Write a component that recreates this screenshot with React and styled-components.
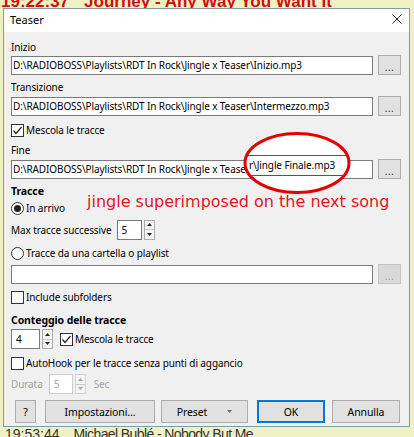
import React from "react";
import styled, { createGlobalStyle } from "styled-components";

const GlobalStyle = createGlobalStyle`
  html, body {
    margin: 0;
    padding: 0;
  }
  body {
    background: #eff1c5;
    font-family: "Noto Sans", "Liberation Sans", sans-serif;
  }
`;

const Screen = styled.div`
  width: 414px;
  height: 437px;
  overflow: hidden;
  display: flex;
  flex-direction: column;
  background: #eff1c5;
`;

const PlaylistLine = styled.div`
  flex-shrink: 0;
  height: ${(p) => p.$h}px;
  overflow: hidden;
  display: flex;
  align-items: ${(p) => (p.$top ? "flex-end" : "flex-start")};
  gap: ${(p) => p.$gap}px;
  padding-left: ${(p) => p.$pl}px;
  color: ${(p) => p.$color};
  font-family: "Liberation Sans", Arial, sans-serif;
  font-size: ${(p) => p.$size}px;
  font-weight: ${(p) => (p.$bold ? 700 : 400)};
  line-height: ${(p) => p.$lh}px;
  white-space: nowrap;
`;

const Dialog = styled.div`
  position: relative;
  flex-shrink: 0;
  margin-left: 3px;
  width: 407px;
  height: 419px;
  box-sizing: border-box;
  border: 1px solid #7d9fa3;
  background: #f0f0f0;
  display: flex;
  flex-direction: column;
  font-size: 10px;
  letter-spacing: -0.1px;
  color: #000;
`;

const TitleBar = styled.div`
  height: 20px;
  background: #fff;
  display: flex;
  align-items: center;
  justify-content: space-between;
  padding: 0 7px 3px 6px;
  font-size: 11px;
  letter-spacing: 0;
`;

const Body = styled.div`
  flex: 1;
  display: flex;
  flex-direction: column;
  padding: 8px 8px 0 7px;
`;

const Line = styled.div`
  margin-top: ${(p) => p.$mt || 0}px;
  margin-left: ${(p) => p.$ml || 0}px;
  height: ${(p) => p.$h || 14}px;
  display: flex;
  align-items: center;
  gap: ${(p) => p.$gap || 0}px;
  line-height: 14px;
  white-space: nowrap;
  color: ${(p) => (p.$disabled ? "#a2a2a2" : "#000")};
`;

const SectionTitle = styled(Line)`
  font-weight: 700;
  font-size: 10.5px;
`;

const Caption = styled.span`
  margin-right: ${(p) => p.$mr || 0}px;
  margin-left: ${(p) => p.$ml || 0}px;
`;

const PathBox = styled.input`
  flex: 1;
  min-width: 0;
  height: 19px;
  box-sizing: border-box;
  margin: 0;
  padding: 0 1px;
  border: 1px solid #7a7a7a;
  background: #fff;
  font: inherit;
  letter-spacing: inherit;
  color: #000;
  outline: none;
`;

const BrowseButton = styled.div`
  width: 23px;
  height: 20px;
  box-sizing: border-box;
  margin-left: 5px;
  border: 1px solid ${(p) => (p.$disabled ? "#c4c4c4" : "#adadad")};
  background: ${(p) => (p.$disabled ? "#d9d9d9" : "#e1e1e1")};
  color: ${(p) => (p.$disabled ? "#a0a0a0" : "#333")};
  display: flex;
  align-items: center;
  justify-content: center;
  padding-top: 3px;
  font-size: 10px;
  letter-spacing: 0.5px;
`;

const Box = styled.span`
  width: 13px;
  height: 13px;
  box-sizing: border-box;
  border: 1px solid #333;
  background: #fff;
  display: inline-flex;
  align-items: center;
  justify-content: center;
  flex-shrink: 0;
`;

const RadioRing = styled(Box)`
  border-radius: 50%;
`;

const RadioDot = styled.span`
  width: 7px;
  height: 7px;
  border-radius: 50%;
  background: #222;
`;

const SpinGroup = styled.span`
  display: flex;
`;

const SpinField = styled.div`
  width: ${(p) => p.$w}px;
  height: 20px;
  box-sizing: border-box;
  border: 1px solid ${(p) => (p.$disabled ? "#cccccc" : "#7a7a7a")};
  background: #fff;
  padding-left: 4px;
  display: flex;
  align-items: center;
  color: ${(p) => (p.$disabled ? "#a2a2a2" : "#000")};
`;

const SpinArrows = styled.div`
  width: 11px;
  height: 20px;
  box-sizing: border-box;
  margin-left: 2px;
  border: 1px solid ${(p) => (p.$disabled ? "#d4d4d4" : "#adadad")};
  background: #f4f4f4;
  display: flex;
  flex-direction: column;
`;

const ArrowHalf = styled.div`
  flex: 1;
  display: flex;
  align-items: center;
  justify-content: center;
  & + & {
    border-top: 1px solid #c8c8c8;
  }
`;

const ButtonBar = styled.div`
  margin-top: 6px;
  height: 23px;
  display: flex;
`;

const Button = styled.div`
  width: ${(p) => p.$w}px;
  margin-left: ${(p) => p.$ml}px;
  height: 23px;
  box-sizing: border-box;
  border: 1px solid ${(p) => (p.$default ? "#0078d7" : "#adadad")};
  box-shadow: ${(p) => (p.$default ? "inset 0 0 0 1px #0078d7" : "none")};
  background: #e1e1e1;
  display: flex;
  align-items: center;
  justify-content: center;
  gap: ${(p) => p.$gap || 0}px;
  font-size: 10.5px;
  color: #000;
`;

const Callout = styled.svg`
  position: absolute;
  left: 238px;
  top: 122px;
  overflow: visible;
`;

const Note = styled.div`
  position: absolute;
  left: 83px;
  top: 183px;
  font-family: "DejaVu Sans", Verdana, sans-serif;
  font-size: 16px;
  letter-spacing: 0;
  line-height: 20px;
  color: #e3151f;
  white-space: nowrap;
`;

const Check = () => (
  <svg width="11" height="11" viewBox="0 0 11 11">
    <polyline points="1.5,5.5 4,8.5 9.5,2" fill="none" stroke="#222" strokeWidth="1.2" />
  </svg>
);

const CheckBox = ({ checked }) => <Box>{checked && <Check />}</Box>;

const Radio = ({ checked }) => <RadioRing>{checked && <RadioDot />}</RadioRing>;

const Triangle = ({ up, color }) => (
  <svg width="5" height="3" viewBox="0 0 5 3">
    <polygon points={up ? "0,3 5,3 2.5,0" : "0,0 5,0 2.5,3"} fill={color} />
  </svg>
);

const Spin = ({ value, width, disabled }) => (
  <SpinGroup>
    <SpinField $w={width} $disabled={disabled}>{value}</SpinField>
    <SpinArrows $disabled={disabled}>
      <ArrowHalf><Triangle up color={disabled ? "#a8a8a8" : "#222"} /></ArrowHalf>
      <ArrowHalf><Triangle color={disabled ? "#a8a8a8" : "#222"} /></ArrowHalf>
    </SpinArrows>
  </SpinGroup>
);

const PathRow = ({ value, mt, disabled }) => (
  <Line $mt={mt} $h={20}>
    <PathBox readOnly value={value} />
    <BrowseButton $disabled={disabled}>...</BrowseButton>
  </Line>
);

const CloseIcon = () => (
  <svg width="10" height="10" viewBox="0 0 10 10">
    <path d="M0.5 0.5 L9.5 9.5 M9.5 0.5 L0.5 9.5" stroke="#222" strokeWidth="1" />
  </svg>
);

const base = "D:\\RADIOBOSS\\Playlists\\RDT In Rock\\Jingle x Teaser\\";

export default function App() {
  return (
    <Screen>
      <GlobalStyle />
      <PlaylistLine $h={8} $top $gap={15} $pl={1} $lh={12} $color="#cf1010" $size={17} $bold>
        <span>19:22:37</span>
        <span>Journey - Any Way You Want It</span>
      </PlaylistLine>

      <Dialog>
        <TitleBar>
          <span>Teaser</span>
          <CloseIcon />
        </TitleBar>

        <Body>
          <Line>Inizio</Line>
          <PathRow mt={1} value={base + "Inizio.mp3"} />
          <Line $mt={5}>Transizione</Line>
          <PathRow mt={2} value={base + "Intermezzo.mp3"} />
          <Line $mt={6} $h={16} $gap={2}>
            <CheckBox checked />
            Mescola le tracce
          </Line>
          <Line $mt={5}>Fine</Line>
          <PathRow mt={2} value={base + "Jingle Finale.mp3"} />

          <SectionTitle $mt={5}>Tracce</SectionTitle>
          <Line $mt={3} $gap={2}>
            <Radio checked />
            In arrivo
          </Line>
          <Line $mt={4} $h={21} $gap={5}>
            Max tracce successive
            <Spin value="5" width={25} />
          </Line>
          <Line $mt={6} $gap={2}>
            <Radio />
            Tracce da una cartella o playlist
          </Line>
          <PathRow mt={4} value="" disabled />
          <Line $mt={6} $gap={2}>
            <CheckBox />
            Include subfolders
          </Line>

          <SectionTitle $mt={9}>Conteggio delle tracce</SectionTitle>
          <Line $mt={2} $h={20}>
            <Spin value="4" width={29} />
            <Line $gap={2} $ml={7}>
              <CheckBox checked />
              Mescola le tracce
            </Line>
          </Line>
          <Line $mt={7} $gap={2}>
            <CheckBox />
            AutoHook per le tracce senza punti di aggancio
          </Line>
          <Line $mt={4} $h={20} $disabled>
            <Caption $mr={6}>Durata</Caption>
            <Spin value="5" width={24} disabled />
            <Caption $ml={8}>Sec</Caption>
          </Line>

          <ButtonBar>
            <Button $w={21} $ml={4}>?</Button>
            <Button $w={110} $ml={9}>Impostazioni...</Button>
            <Button $w={87} $ml={6} $gap={20}>
              Preset
              <Triangle color="#707070" />
            </Button>
            <Button $w={68} $ml={9} $default>OK</Button>
            <Button $w={68} $ml={7}>Annulla</Button>
          </ButtonBar>
        </Body>

        <Callout width="110" height="65" viewBox="0 0 110 65">
          <defs>
            <clipPath id="inside">
              <ellipse cx="55" cy="32" rx="51" ry="28.5" />
            </clipPath>
          </defs>
          <ellipse cx="55" cy="32" rx="52" ry="29.5" fill="#fff" />
          <g clipPath="url(#inside)" stroke="#555" strokeWidth="1">
            <line x1="0" y1="24.5" x2="110" y2="24.5" />
            <line x1="0" y1="44.5" x2="110" y2="44.5" />
          </g>
          <text x="7" y="38" fontFamily="Noto Sans, sans-serif" fontSize="10" letterSpacing="-0.1" fill="#000">
            r\Jingle Finale.mp3
          </text>
          <ellipse cx="55" cy="32" rx="52" ry="29.5" fill="none" stroke="#e30000" strokeWidth="3" />
        </Callout>
        <Note>jingle superimposed on the next song</Note>
      </Dialog>

      <PlaylistLine $h={10} $gap={14} $pl={5} $lh={14} $color="#333" $size={14}>
        <span>19:53:44</span>
        <span style={{ letterSpacing: -0.6 }}>Michael Bublé - Nobody But Me</span>
      </PlaylistLine>
    </Screen>
  );
}
